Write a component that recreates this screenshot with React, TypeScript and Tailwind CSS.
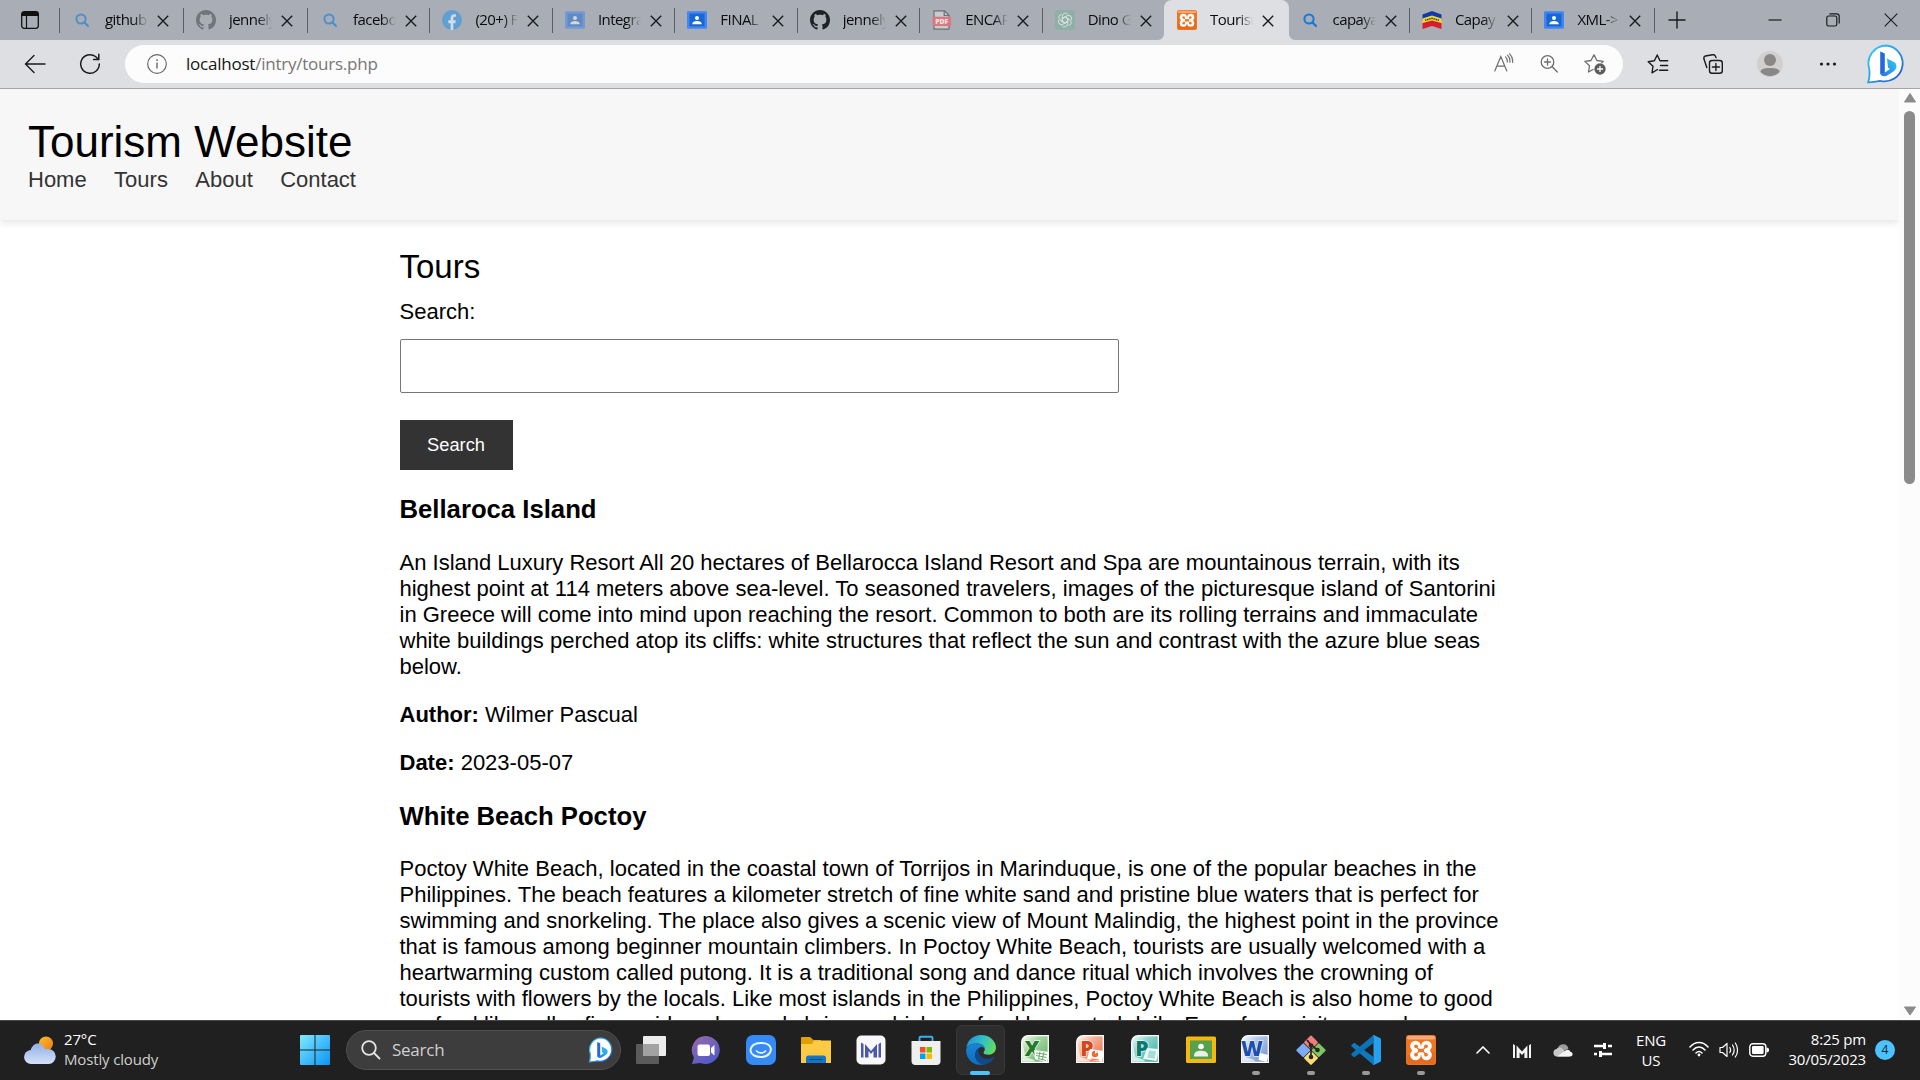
import React from "react";

const ui = "font-['Open_Sans',sans-serif]";

/* ---------- shared artwork ---------- */

function Magnifier({ faded }: { faded?: boolean }) {
  return (
    <svg viewBox="0 0 20 20" className={faded ? "size-5 shrink-0 opacity-60" : "size-5 shrink-0"}>
      <circle cx="9" cy="9" r="4.600" fill="none" stroke="#1878d2" strokeWidth="2" />
      <path d="M12.400 12.400 16 16" stroke="#1878d2" strokeWidth="2.200" strokeLinecap="round" />
    </svg>
  );
}

function Github({ faded }: { faded?: boolean }) {
  return (
    <svg viewBox="0 0 16 16" className={faded ? "size-5 shrink-0 opacity-40" : "size-5 shrink-0"} fill="#1d2227">
      <path d="M8 0C3.580 0 0 3.580 0 8c0 3.540 2.290 6.530 5.470 7.590.4.070.55-.17.55-.38 0-.19-.01-.82-.01-1.490-2.010.37-2.530-.49-2.690-.94-.09-.23-.48-.94-.82-1.130-.28-.15-.68-.52-.01-.53.63-.01 1.080.58 1.230.82.72 1.210 1.870.87 2.330.66.070-.52.28-.87.51-1.070-1.780-.2-3.640-.89-3.640-3.950 0-.87.31-1.590.82-2.150-.08-.2-.36-1.020.08-2.120 0 0 .67-.21 2.200.82.64-.18 1.320-.27 2-.27s1.360.09 2 .27c1.530-1.040 2.200-.82 2.200-.82.44 1.100.16 1.920.08 2.120.51.56.82 1.270.82 2.150 0 3.070-1.870 3.750-3.650 3.950.29.25.54.73.54 1.480 0 1.070-.01 1.930-.01 2.200 0 .21.15.46.55.38A8.010 8.010 0 0 0 16 8c0-4.420-3.580-8-8-8Z" />
    </svg>
  );
}

function Facebook() {
  return (
    <svg viewBox="0 0 20 20" className="size-5 shrink-0">
      <circle cx="10" cy="10" r="10" fill="#609fd2" />
      <path d="M8.600 20v-6.800H6.300v-3h2.300V8.100c0-2.600 1.500-3.900 3.700-3.900.9 0 1.600.1 1.600.1v2.500h-1.200c-1.100 0-1.400.7-1.400 1.400v2h2.500l-.4 3h-2.100V20Z" fill="#d3dce6" />
    </svg>
  );
}

function Classroom({ faded }: { faded?: boolean }) {
  return (
    <svg viewBox="0 0 20 20" className={faded ? "size-5 shrink-0 opacity-50" : "size-5 shrink-0"}>
      <rect y="1.200" width="20" height="17.600" rx="1" fill="#4285f4" />
      <rect x="2.500" y="3.600" width="15" height="12.800" fill="#1967d2" />
      <circle cx="10" cy="8" r="2" fill="#fff" />
      <path d="M5.200 14.200c0-2.200 2.400-3.200 4.800-3.200s4.800 1 4.800 3.200Z" fill="#fff" />
    </svg>
  );
}

function Pdf() {
  return (
    <svg viewBox="0 0 20 20" className="size-5 shrink-0">
      <path d="M2 .8h10.500L17 5.300V19.200H2Z" fill="#c9cbcd" stroke="#6b6f73" strokeWidth="1.200" />
      <path d="M12.200 1v4.500H17" fill="none" stroke="#6b6f73" strokeWidth="1.200" />
      <rect x=".5" y="6.800" width="18.600" height="9.200" rx="1" fill="#d9797f" />
      <text x="9.800" y="14" textAnchor="middle" fontSize="6.800" fontWeight="800" fontFamily="Open Sans" fill="#f2e4e5">PDF</text>
    </svg>
  );
}

function OpenAi() {
  return (
    <svg viewBox="0 0 20 20" className="size-5 shrink-0">
      <rect width="20" height="20" rx="3" fill="#8fb0a7" />
      <g fill="none" stroke="#d3dedb" strokeWidth="1">
        {[0, 60, 120, 180, 240, 300].map((a) => (
          <path key={a} transform={`rotate(${a} 10 10)`} d="M7.400 11.500V6.200a3.100 3.100 0 0 1 5.700-1.700M7.400 8.400 10 6.900l4 2.300" />
        ))}
      </g>
    </svg>
  );
}

function Xampp({ large }: { large?: boolean }) {
  return (
    <svg viewBox="0 0 30 30" className={large ? "size-[30px]" : "size-5 shrink-0"}>
      <rect width="30" height="30" rx="3" fill="#ee7623" />
      <rect x="1" y="1" width="28" height="3.500" rx="1.700" fill="#f6a878" />
      <path d="M1 20 29 17v9a3 3 0 0 1-3 3H4a3 3 0 0 1-3-3Z" fill="#e0661a" opacity=".6" />
      <g fill="#fff">
        <circle cx="9.500" cy="11" r="5.300" />
        <circle cx="20.500" cy="11" r="5.300" />
        <circle cx="9.500" cy="20" r="5.300" />
        <circle cx="20.500" cy="20" r="5.300" />
        <rect x="6" y="11.500" width="18" height="8" />
      </g>
      <g fill="#ee7623">
        <circle cx="10" cy="11.300" r="1.900" />
        <circle cx="20" cy="11.300" r="1.900" />
        <circle cx="10" cy="19.700" r="1.900" />
        <circle cx="20" cy="19.700" r="1.900" />
        <path d="M10 11.300c1.800 2 1.800 2.600 3 3.200h4c1.200-.6 1.200-1.200 3-3.200M10 19.700c1.800-2 1.800-2.600 3-3.200h4c1.200.6 1.200 1.200 3 3.200" fill="none" stroke="#ee7623" strokeWidth="1.300" />
        <rect x="12" y="14.300" width="6" height="2.400" />
      </g>
    </svg>
  );
}

function Shield() {
  return (
    <svg viewBox="0 0 20 20" className="size-5 shrink-0">
      <path d="M.5 4.500 10 1l9.500 3.500V10L10 7 .5 10Z" fill="#1638a8" />
      <path d="M.5 8.500 10 5.500l9.500 3V14L10 11.500.5 14Z" fill="#f3dc2f" />
      <path d="M.5 13 10 10.500l9.500 2.500v6L10 16 .5 19Z" fill="#d91c2c" />
      <path d="M3 10.300 10 8.300l7 2" fill="none" stroke="#3b3a20" strokeWidth="1.500" strokeDasharray="1.500 .7" />
    </svg>
  );
}

function Bing({ className }: { className: string }) {
  return (
    <svg viewBox="0 0 40 40" className={className}>
      <defs>
        <linearGradient id="bingRing" x1="0" y1="0" x2="1" y2="1">
          <stop offset="0" stopColor="#38d0f2" />
          <stop offset=".5" stopColor="#2c9bec" />
          <stop offset="1" stopColor="#1b4fc9" />
        </linearGradient>
        <linearGradient id="bingB" x1="0" y1="1" x2="1" y2="0">
          <stop offset="0" stopColor="#2a6fe8" />
          <stop offset=".5" stopColor="#2aa0ee" />
          <stop offset="1" stopColor="#35cdf0" />
        </linearGradient>
      </defs>
      <path d="M20.500 1.500a18 18 0 1 1-6.500 35.300c-3.500.5-7 1.400-11.800 1.500C3.800 34 3.700 29 3.300 25A18 18 0 0 1 20.500 1.500Z" fill="#fff" stroke="url(#bingRing)" strokeWidth="1.800" />
      <path d="M14.200 7.600 18.800 9.600v19.500l-2 2.500-2.600-2Z" fill="#2468e0" />
      <path d="m21 14.500 7.500 3.800c3 2.500 2.300 7-.8 9l-6.500 4.100c-3.600 1.800-7 .2-7-3 2 1.400 3.500.8 4.600 0l5.200-3.400-2-1.200Z" fill="url(#bingB)" />
    </svg>
  );
}

/* ---------- browser tabs ---------- */

type TabInfo = { icon: React.ReactNode; label: string; active?: boolean; line?: boolean; wide?: boolean };

const tabs: TabInfo[] = [
  { icon: <Magnifier faded />, label: "github", line: true, wide: true },
  { icon: <Github faded />, label: "jennely", line: true, wide: true },
  { icon: <Magnifier faded />, label: "facebo", line: true },
  { icon: <Facebook />, label: "(20+) F", line: true },
  { icon: <Classroom faded />, label: "Integra", line: true },
  { icon: <Classroom />, label: "FINAL", line: true },
  { icon: <Github />, label: "jennely", line: true },
  { icon: <Pdf />, label: "ENCAP", line: true },
  { icon: <OpenAi />, label: "Dino G", line: true },
  { icon: <Xampp />, label: "Tourism", active: true },
  { icon: <Magnifier />, label: "capaya" },
  { icon: <Shield />, label: "Capay", line: true },
  { icon: <Classroom />, label: "XML->", line: true },
];

function Tab({ icon, label, active, line, wide }: TabInfo) {
  return (
    <div className={wide ? "relative h-10 w-[124px] shrink-0" : "relative h-10 w-[122.450px] shrink-0"}>
      {line && <div className="absolute top-2 left-0 h-[25px] w-px bg-[#5c5f63]" />}
      {active && (
        <>
          <div className="absolute inset-y-0 -right-[2px] left-0 rounded-t-lg bg-[#dedfe3]" />
          <svg viewBox="0 0 6 6" className="absolute bottom-0 -left-[6px] size-[6px]" fill="#dedfe3"><path d="M6 0v6H0a6 6 0 0 0 6-6Z" /></svg>
          <svg viewBox="0 0 6 6" className="absolute -right-[8px] bottom-0 size-[6px]" fill="#dedfe3"><path d="M0 0v6h6A6 6 0 0 1 0 0Z" /></svg>
        </>
      )}
      <div className="relative flex h-[39px] items-center pl-[13px]">
        {icon}
        <span className="mb-px ml-[13px] w-[43px] overflow-hidden text-[15px] leading-5 tracking-[-0.550px] whitespace-nowrap text-[#0b0b0b] [mask-image:linear-gradient(to_right,#000_66%,transparent)]">
          {label}
        </span>
        <svg viewBox="0 0 12 12" className="mt-[2px] ml-[9px] size-3 shrink-0" stroke="#1b1b1b" strokeWidth="1.400">
          <path d="M.8.800 11.200 11.200M11.200.800.800 11.200" />
        </svg>
      </div>
    </div>
  );
}

function TabStrip() {
  return (
    <div className="flex h-10 shrink-0 bg-[#a9aeb6]">
      <div className="flex w-[59px] shrink-0 items-center pl-[21px]">
        <svg viewBox="0 0 18 18" className="size-[18px]">
          <rect x=".7" y=".7" width="16.600" height="16.600" rx="2.500" fill="none" stroke="#111" strokeWidth="1.300" />
          <path d="M.5 5V3A2.500 2.500 0 0 1 3 .5h12A2.500 2.500 0 0 1 17.500 3v2Z" fill="#111" />
          <path d="M5.500 5v12" stroke="#111" strokeWidth="1.200" />
        </svg>
      </div>
      {tabs.map((t, i) => (
        <Tab key={i} {...t} />
      ))}
      <div className="relative flex h-[39px] flex-1 items-center justify-between pr-[22px] pl-[14px]">
        <div className="absolute top-2 left-0 h-[25px] w-px bg-[#5c5f63]" />
        <svg viewBox="0 0 18 18" className="size-[18px]" stroke="#1b1b1b" strokeWidth="1.400">
          <path d="M9 .5v17M.5 9h17" />
        </svg>
        <div className="flex items-center gap-11">
          <svg viewBox="0 0 14 14" className="size-[14px]" stroke="#1b1b1b" strokeWidth="1.200">
            <path d="M.5 7h13" />
          </svg>
          <svg viewBox="0 0 14 14" className="size-[14px]" fill="none" stroke="#1b1b1b" strokeWidth="1.200">
            <rect x=".8" y="3" width="10" height="10" rx="1.800" />
            <path d="M3.500.8h7A2.700 2.700 0 0 1 13.200 3.500v7" />
          </svg>
          <svg viewBox="0 0 14 14" className="size-[14px]" stroke="#1b1b1b" strokeWidth="1.100">
            <path d="M.7.700 13.300 13.300M13.300.700.700 13.300" />
          </svg>
        </div>
      </div>
    </div>
  );
}

/* ---------- address bar ---------- */

function Toolbar() {
  return (
    <div className="flex h-[49px] shrink-0 items-center border-b border-b-[#a3a5a9] bg-[#dedfe3] pl-6">
      <svg viewBox="0 0 22 22" className="mb-px size-[22px]" fill="none" stroke="#1b1b1b" strokeWidth="1.400" strokeLinecap="round">
        <path d="M21 11H1.500M10 2.500 1.500 11l8.500 8.500" />
      </svg>
      <svg viewBox="0 0 22 22" className="ml-[33px] size-[22px]" fill="none" stroke="#1b1b1b" strokeWidth="1.500" strokeLinecap="round">
        <path d="M20.300 11A9.300 9.300 0 1 1 16.500 3.500L19.500 6.200M19.800 1.300v5.200h-5.200" />
      </svg>
      <div className="ml-6 flex h-[38px] w-[1498px] items-center rounded-full bg-[#fcfcfc] pr-[17px] pl-[22px]">
        <svg viewBox="0 0 20 20" className="size-5" fill="none" stroke="#6a6a6a" strokeWidth="1.200">
          <circle cx="10" cy="10" r="9.300" />
          <path d="M10 8.500v6M10 5.300v1.600" strokeWidth="1.400" />
        </svg>
        <span className="mb-px ml-[19px] text-[17px] leading-5 tracking-[-0.230px] text-[#767676]">
          <span className="text-[#161616]">localhost</span>/intry/tours.php
        </span>
        <svg viewBox="0 0 20 20" className="mr-[26px] mb-[3px] ml-auto size-5" fill="none" stroke="#6d6d6d" strokeWidth="1.200" strokeLinecap="round">
          <path d="M.8 18 6.800 3.500 12.800 18M2.800 13.200h8M11.500 3.800c1.500 1.500 2 3.400 1.800 5.200M13.500 2.200c2 2 2.700 4.400 2.400 7M15.600.8c2.500 2.500 3.500 5.500 3 8.500" />
        </svg>
        <svg viewBox="0 0 18 18" className="mr-[26px] mb-px size-[18px]" fill="none" stroke="#6d6d6d" strokeWidth="1.300" strokeLinecap="round">
          <circle cx="7.500" cy="7" r="6.300" />
          <path d="m12 11.500 5.300 5.500M4.500 7h6M7.500 4v6" />
        </svg>
        <svg viewBox="0 0 22 22" className="size-[22px]" fill="none" stroke="#6d6d6d" strokeWidth="1.300" strokeLinejoin="round">
          <path d="M9.500 16.200 4.500 19l1-6.200L.8 8.400l6.200-.9L10 1.800l2.900 5.700 6.300.9-1.700 1.600" />
          <circle cx="16" cy="16" r="5.700" fill="#5d5d5d" stroke="none" />
          <path d="M16 13v6M13 16h6" stroke="#fff" />
        </svg>
      </div>
      <svg viewBox="0 0 22 20" className="ml-6 h-5 w-[22px]" fill="none" stroke="#1b1b1b" strokeWidth="1.400" strokeLinecap="round" strokeLinejoin="round">
        <path d="M10.500 15.500 5 18.800l1-6.500L1.200 7.700l6.200-1L10.200 1l2.800 5.700h7.700M13.500 11.500h7.200M12.500 16.300h8.200" />
      </svg>
      <svg viewBox="0 0 20 20" className="ml-[34px] size-5" fill="none" stroke="#1b1b1b" strokeWidth="1.400" strokeLinecap="round">
        <rect x="6.500" y="6.500" width="12.800" height="12.800" rx="2.500" />
        <path d="M12.900 9.500v7M9.400 13h7M3.800 13.500.9 4.800A2.400 2.400 0 0 1 2.400 2L9.500.8A2.400 2.400 0 0 1 12.300 2l.8 1.700" />
      </svg>
      <svg viewBox="0 0 26 26" className="ml-[34px] size-[26px]">
        <circle cx="13" cy="13" r="13" fill="#d2d0ce" />
        <circle cx="13" cy="9" r="6" fill="#8a8886" />
        <path d="M3.500 21c0-2.500 3-4 9.500-4s9.500 1.500 9.500 4A13 13 0 0 1 3.500 21Z" fill="#8a8886" />
      </svg>
      <svg viewBox="0 0 18 6" className="ml-9 h-[6px] w-[18px]" fill="#1b1b1b">
        <circle cx="2.500" cy="3" r="1.600" />
        <circle cx="9" cy="3" r="1.600" />
        <circle cx="15.500" cy="3" r="1.600" />
      </svg>
      <Bing className="ml-[29px] size-10" />
    </div>
  );
}

/* ---------- web page ---------- */

type Tour = { name: string; lines: string[]; author?: string; date?: string };

const tours: Tour[] = [
  {
    name: "Bellaroca Island",
    lines: [
      "An Island Luxury Resort All 20 hectares of Bellarocca Island Resort and Spa are mountainous terrain, with its",
      "highest point at 114 meters above sea-level. To seasoned travelers, images of the picturesque island of Santorini",
      "in Greece will come into mind upon reaching the resort. Common to both are its rolling terrains and immaculate",
      "white buildings perched atop its cliffs: white structures that reflect the sun and contrast with the azure blue seas",
      "below.",
    ],
    author: "Wilmer Pascual",
    date: "2023-05-07",
  },
  {
    name: "White Beach Poctoy",
    lines: [
      "Poctoy White Beach, located in the coastal town of Torrijos in Marinduque, is one of the popular beaches in the",
      "Philippines. The beach features a kilometer stretch of fine white sand and pristine blue waters that is perfect for",
      "swimming and snorkeling. The place also gives a scenic view of Mount Malindig, the highest point in the province",
      "that is famous among beginner mountain climbers. In Poctoy White Beach, tourists are usually welcomed with a",
      "heartwarming custom called putong. It is a traditional song and dance ritual which involves the crowning of",
      "tourists with flowers by the locals. Like most islands in the Philippines, Poctoy White Beach is also home to good",
      "seafood like yellowfin, squid, crabs, and shrimps which are food harvested daily. Even for a visitors, and",
    ],
  },
];

function WebPage() {
  return (
    <div className="flex min-h-0 flex-1 overflow-hidden bg-white font-['Liberation_Sans',Arial,sans-serif] text-[22px] leading-[26px] text-black">
      <div className="min-w-0 flex-1 overflow-hidden">
        <header className="h-[131px] bg-[#f7f7f7] px-7 pt-[27px] shadow-[0_3px_7px_rgba(0,0,0,0.100)]">
          <h1 className="text-[44px] leading-[51px]">Tourism Website</h1>
          <nav className="flex gap-[27.400px] text-[#333]">
            <a>Home</a>
            <a>Tours</a>
            <a>About</a>
            <a>Contact</a>
          </nav>
        </header>
        <main className="ml-[399.500px] w-[1100px] pt-7">
          <h2 className="text-[33px] leading-[38px]">Tours</h2>
          <p className="mt-[13px]">Search:</p>
          <input className="mt-[14px] block h-[54px] w-[719px] rounded-[2px] border border-[#767676] bg-white" />
          <button className="mt-[27px] block h-[50px] w-[113px] bg-[#333] text-[18.300px] text-white">Search</button>
          {tours.map((t) => (
            <section key={t.name} className="group">
              <h3 className="mt-6 text-[25.700px] leading-[30px] font-bold group-last:mt-[25px]">{t.name}</h3>
              <p className="mt-[26px] whitespace-nowrap group-last:mt-[25px]">
                {t.lines.map((l) => (
                  <span key={l} className="block">{l}</span>
                ))}
              </p>
              {t.author && <p className="mt-[22px]"><b>Author:</b> {t.author}</p>}
              {t.date && <p className="mt-[22px]"><b>Date:</b> {t.date}</p>}
            </section>
          ))}
        </main>
      </div>
      <div className="flex w-[21px] shrink-0 flex-col items-center justify-between bg-[#fcfcfc] pt-1 pb-1">
        <svg viewBox="0 0 12 10" className="h-[10px] w-3 shrink-0"><path d="M6 .5 11.500 9H.5Z" fill="#8b8b8b" stroke="#8b8b8b" strokeLinejoin="round" /></svg>
        <div className="mt-2 h-[373px] w-[11px] rounded-full bg-[#8b8b8b]" />
        <div className="flex-1" />
        <svg viewBox="0 0 12 10" className="h-[10px] w-3 shrink-0"><path d="M6 9 .5 1h11Z" fill="#8b8b8b" stroke="#8b8b8b" strokeLinejoin="round" /></svg>
      </div>
    </div>
  );
}

/* ---------- taskbar ---------- */

function Office({ letter, id, dark, mid, light, children }: { letter: string; id: string; dark: string; mid: string; light: string; children: React.ReactNode }) {
  return (
    <svg viewBox="0 0 28 28" className="mr-[2px] mb-[2px] size-7">
      <defs>
        <linearGradient id={id} x1="0" y1="0" x2="1" y2="1">
          <stop offset="0" stopColor="#fff" />
          <stop offset=".35" stopColor={light} />
          <stop offset="1" stopColor={mid} />
        </linearGradient>
      </defs>
      <path d="M7 .7h20.300v26.600H.7V7A6.300 6.300 0 0 1 7 .7Z" fill={`url(#${id})`} stroke="#fff" strokeWidth="1.300" />
      <path d="M1.500 24V8l3 14 9 3v1.500h-12Z" fill="#fff" opacity=".7" />
      <text x="11" y="20.500" textAnchor="middle" fontFamily="Open Sans" fontWeight="800" fontSize="21" fill={dark} stroke="#fff" strokeWidth="1.200" paintOrder="stroke">{letter}</text>
      {children}
    </svg>
  );
}

const icon30 = "size-[30px]";

const apps: { name: string; art: React.ReactNode; state?: "active" | "open" }[] = [
  {
    name: "task-view",
    art: (
      <svg viewBox="0 0 30 30" className={icon30}>
        <rect x="7" y="1" width="23" height="20" rx="1" fill="#ececec" />
        <rect x="0" y="9" width="23" height="20" rx="1" fill="#5b5b5b" />
        <rect x="7" y="9" width="16" height="12" fill="#a2a2a2" />
      </svg>
    ),
  },
  {
    name: "chat",
    art: (
      <svg viewBox="0 0 30 30" className={icon30}>
        <defs>
          <linearGradient id="chatFill" x1="0" y1="0" x2=".7" y2="1">
            <stop offset="0" stopColor="#9a6aa8" />
            <stop offset="1" stopColor="#5059c9" />
          </linearGradient>
        </defs>
        <path d="M15 1a14 14 0 1 1-5.500 27L1 29l2-6.500A14 14 0 0 1 15 1Z" fill="url(#chatFill)" />
        <rect x="6.500" y="9.500" width="12.500" height="11.500" rx="2" fill="#fff" />
        <path d="m20 13 3.500-3v10.500L20 17.500Z" fill="#fff" />
      </svg>
    ),
  },
  {
    name: "assistant",
    art: (
      <svg viewBox="0 0 30 30" className={icon30}>
        <rect width="30" height="30" rx="7" fill="#368af6" />
        <path d="M8 20.500C4.500 18.500 4 15 5.300 12.500 7 9.300 10.500 8 15 8s8.300 1.500 9.500 4.500c1.500 4-2 9.500-9.500 9.500-2.800 0-5-.5-7-1.500" fill="none" stroke="#e8f3ff" strokeWidth="2" strokeLinecap="round" />
        <path d="M10.500 16c2.500 2.600 6.500 2.600 9 0" fill="none" stroke="#e8f3ff" strokeWidth="1.700" strokeLinecap="round" />
      </svg>
    ),
  },
  {
    name: "explorer",
    art: (
      <svg viewBox="0 0 30 30" className={icon30}>
        <path d="M0 3a1 1 0 0 1 1-1h8l3.500 3H20v8H0Z" fill="#e0a000" />
        <path d="M0 9h11l2-3.500h17V28H0Z" fill="#fdcb43" />
        <path d="M5 28v-5a2.500 2.500 0 0 1 2.500-2.500h15A2.500 2.500 0 0 1 25 23v5Z" fill="#1376c8" />
        <path d="M8.500 24.500h13" stroke="#0b4f8d" strokeWidth="1.300" />
      </svg>
    ),
  },
  {
    name: "mendeley",
    art: (
      <svg viewBox="0 0 30 30" className={icon30}>
        <rect x=".5" y=".5" width="29" height="29" rx="5" fill="#f8f8fb" />
        <g fill="#4b57a8">
          <path d="M5 7.500l2.500 1.500v13.500H5ZM25 7.500 22.500 9v13.500H25Z" />
          <path d="M9 22.500V9l6 7 6-7v13.500h-3.500V16L15 19l-2.500-3v6.500Z" />
        </g>
      </svg>
    ),
  },
  {
    name: "store",
    art: (
      <svg viewBox="0 0 30 30" className={icon30}>
        <path d="M8.500 6.500V3A1.200 1.200 0 0 1 9.700 1.800h10.600A1.200 1.200 0 0 1 21.500 3v3.500" fill="none" stroke="#36b3ea" strokeWidth="1.900" />
        <path d="M.5 6h29v20a4 4 0 0 1-4 4h-21a4 4 0 0 1-4-4Z" fill="#efefef" />
        <path d="M9 12h5.500v5.500H9Z" fill="#f25022" />
        <path d="M15.500 12H21v5.500h-5.500Z" fill="#7fba00" />
        <path d="M9 18.500h5.500V24H9Z" fill="#00a4ef" />
        <path d="M15.500 18.500H21V24h-5.500Z" fill="#ffb900" />
      </svg>
    ),
  },
  {
    name: "edge",
    state: "active",
    art: (
      <svg viewBox="0 0 30 30" className={icon30}>
        <defs>
          <linearGradient id="edgeTop" x1="0" y1=".3" x2="1" y2=".6">
            <stop offset="0" stopColor="#2191d8" />
            <stop offset=".5" stopColor="#31bfc9" />
            <stop offset="1" stopColor="#66dc58" />
          </linearGradient>
          <linearGradient id="edgeLow" x1="0" y1="0" x2="0" y2="1">
            <stop offset="0" stopColor="#1a83d4" />
            <stop offset="1" stopColor="#0f6ec2" />
          </linearGradient>
        </defs>
        <path d="M.2 13C1.500 5 7.500 0 15 0c9 0 15 6.500 15 12.500 0 4.500-3.500 7.200-7.300 7.200-3.400 0-5.200-1-5.200-2 0-.8 1.300-1.500 1.300-3.700C18.800 11 15.500 8.500 11 8.500 5.500 8.500 2 10.500.2 13Z" fill="url(#edgeTop)" />
        <path d="M.1 14.500C1 10.800 5.500 8.500 10.500 8.500c5 0 8 2.500 8.300 5.500-1-1.800-3-2.500-4.500-1.800C9.500 14 8.500 19 10.500 23c1.500 3.500 4.500 6 8 6.500-9.500 2-18.800-4.500-18.400-15Z" fill="url(#edgeLow)" />
        <path d="M14.300 12.200c-2 2-2.500 4.500-1 7.300 2.500 4.500 8.200 5.500 13.700 2.700.9-.4 1.400.2 1 .9A14.500 14.500 0 0 1 18 29.700C12 29 8.500 24 9 19.500c.3-3.300 2.500-6.300 5.300-7.300Z" fill="#114a8b" />
      </svg>
    ),
  },
  {
    name: "excel",
    art: (
      <Office letter="X" id="docExcel" dark="#227a2b" mid="#5fae62" light="#a9d8a5">
        <path d="m13 15 15 2-2 11-12-4Z" fill="#fff" />
        <path d="m15 18 11 1.500M15 20.500l10.500 2M17 23.500l8 2M19 16.500l-1.500 8M23 17l-2 8.500" stroke="#59a35d" strokeWidth=".9" />
      </Office>
    ),
  },
  {
    name: "powerpoint",
    art: (
      <Office letter="P" id="docPowerpoint" dark="#d4471c" mid="#e5643a" light="#f6b59c">
        <path d="m14 14 14 2-2 11-15-3Z" fill="#fff" />
        <circle cx="19" cy="19" r="3.200" fill="#ea6a3c" />
        <path d="M19 19v-3.500l3 1.500Z" fill="#fff" />
        <path d="m15 24 8 1" stroke="#ea6a3c" />
      </Office>
    ),
  },
  {
    name: "publisher",
    art: (
      <Office letter="P" id="docPublisher" dark="#087a72" mid="#2ea79a" light="#90d6cc">
        <path d="m16 13 12 1-2.500 12L12 24Z" fill="#e9f8f5" />
        <path d="m18 15.500 7 .7-1.500 7.500-7-1.200Z" fill="#a8dcd6" />
      </Office>
    ),
  },
  {
    name: "classroom",
    art: (
      <svg viewBox="0 0 30 30" className={icon30}>
        <rect y="1.500" width="30" height="26.500" rx="1.500" fill="#f3b912" />
        <rect x="4" y="5.500" width="22" height="18.500" fill="#57a04d" />
        <circle cx="15" cy="11.500" r="2.800" fill="#fff" />
        <path d="M8 20.500c0-3.500 3.500-4.800 7-4.800s7 1.300 7 4.800v1H8Z" fill="#e8f2e6" />
      </svg>
    ),
  },
  {
    name: "word",
    state: "open",
    art: (
      <Office letter="W" id="docWord" dark="#1b50b0" mid="#6c8fd0" light="#b5caee">
        <path d="m19 18 8.500 2-2 7-8-2Z" fill="#fff" />
      </Office>
    ),
  },
  {
    name: "git",
    state: "open",
    art: (
      <svg viewBox="0 0 30 30" className={icon30}>
        <g transform="rotate(45 15 15)">
          <rect x="4.500" y="4.500" width="10.300" height="10.300" rx="1" fill="#f27c7c" />
          <rect x="15.500" y="4.500" width="10.300" height="10.300" rx="1" fill="#80c660" />
          <rect x="4.500" y="15.500" width="10.300" height="10.300" rx="1" fill="#7eabf5" />
          <rect x="15.500" y="15.500" width="10.300" height="10.300" rx="1" fill="#fbdc78" />
        </g>
        <path d="M11 5l4 5v12M15 10l6.500 5" fill="none" stroke="#262626" strokeWidth="1.700" />
        <circle cx="15" cy="10.500" r="2.300" fill="#262626" />
        <circle cx="15" cy="22" r="2.300" fill="#262626" />
        <circle cx="21.500" cy="15" r="2.300" fill="#262626" />
      </svg>
    ),
  },
  {
    name: "vscode",
    state: "open",
    art: (
      <svg viewBox="0 0 30 30" className={icon30}>
        <path d="M.5 10 2.500 8.300a1.300 1.300 0 0 1 1.600 0L22.500 22v8L.7 11.500a1.200 1.200 0 0 1-.2-1.500Z" fill="#1178bd" />
        <path d="M.5 20 2.500 21.700a1.300 1.300 0 0 0 1.600 0L22.500 8V0L.7 18.500a1.200 1.200 0 0 0-.2 1.500Z" fill="#0b74b8" />
        <path d="M21.500.3c.5-.4 1.200-.3 1.800 0l5.700 2.700a1.700 1.700 0 0 1 1 1.600v20.800a1.700 1.700 0 0 1-1 1.600l-5.700 2.700c-.6.300-1.300.4-1.800 0 .6.200 1-.3 1-1V1.300c0-.7-.4-1.200-1-1Z" fill="#27a0f0" />
      </svg>
    ),
  },
  { name: "xampp", state: "open", art: <Xampp large /> },
];

function Taskbar() {
  return (
    <div className="h-[60px] shrink-0 border-t border-[#4a4a4a] bg-[#202020]">
      <div className="flex h-[58px] items-center text-white">
        <div className="flex w-[299px] shrink-0 items-center pl-6">
          <svg viewBox="0 0 32 32" className="size-8">
            <defs>
              <linearGradient id="cloudFill" x1="0" y1="0" x2="0" y2="1">
                <stop offset="0" stopColor="#8fb0e8" />
                <stop offset="1" stopColor="#d5e2f7" />
              </linearGradient>
              <linearGradient id="sunFill" x1="0" y1="0" x2="1" y2="1">
                <stop offset="0" stopColor="#fbbc2c" />
                <stop offset="1" stopColor="#ef7d12" />
              </linearGradient>
            </defs>
            <circle cx="22" cy="9.500" r="7" fill="url(#sunFill)" />
            <path d="M7.500 30a7 7 0 0 1-.8-14C8 12 10.500 9.500 14 9.500s6 2.500 7 6c1-.4 1.800-.5 3-.5a7.500 7.500 0 0 1 .5 15Z" fill="url(#cloudFill)" />
          </svg>
          <div className="mb-[2px] ml-2 text-[15px] leading-5 tracking-[-0.150px]">
            <div>27°C</div>
            <div className="text-[#cfcfcf]">Mostly cloudy</div>
          </div>
        </div>
        <svg viewBox="0 0 30 30" className="ml-px size-[30px] shrink-0">
          <defs>
            <linearGradient id="winFill" x1="0" y1="0" x2="1" y2="1">
              <stop offset="0" stopColor="#7fe9ff" />
              <stop offset="1" stopColor="#0a94f5" />
            </linearGradient>
          </defs>
          <path d="M1 0h13.500v14.500H0V1a1 1 0 0 1 1-1ZM15.500 0H29a1 1 0 0 1 1 1v13.500H15.500ZM0 15.500h14.500V30H1a1 1 0 0 1-1-1ZM15.500 15.500H30V29a1 1 0 0 1-1 1H15.500Z" fill="url(#winFill)" />
        </svg>
        <div className="ml-[16px] flex h-10 w-[275px] shrink-0 items-center rounded-full border border-[#4f4f4f] bg-[#3d3d3d] pr-[6px] pl-[14px]">
          <svg viewBox="0 0 20 20" className="size-5" fill="none" stroke="#e4e4e4" strokeWidth="1.800" strokeLinecap="round">
            <circle cx="8" cy="8" r="6.800" />
            <path d="m13 13 5.500 5.500" />
          </svg>
          <span className="ml-[11px] text-[17px] leading-5 tracking-[-0.250px] text-[#cfcfcf]">Search</span>
          <Bing className="ml-auto size-[26px]" />
        </div>
        <div className="ml-[2px] flex shrink-0">
          {apps.map((a) => (
            <div key={a.name} className="relative flex h-[58px] w-[55px] items-center justify-center">
              {a.state === "active" && <div className="absolute inset-x-[3px] top-1 h-[50px] rounded-md border border-[#383838] bg-[#2d2d2d]" />}
              <div className="relative">{a.art}</div>
              {a.state === "active" && <div className="absolute bottom-1 left-[17px] h-1 w-5 rounded-full bg-[#4cc2ff]" />}
              {a.state === "open" && <div className="absolute bottom-1 left-[24px] h-1 w-2 rounded-full bg-[#9a9a9a]" />}
            </div>
          ))}
        </div>
        <svg viewBox="0 0 14 8" className="ml-[28px] h-2 w-[14px] shrink-0" fill="none" stroke="#fff" strokeWidth="1.600" strokeLinecap="round">
          <path d="m1 7 6-6 6 6" />
        </svg>
        <svg viewBox="0 0 18 14" className="mt-[2px] ml-[23px] h-[14px] w-[18px] shrink-0" fill="#f4f4f4">
          <path d="M0 0l2 1.200V14H0ZM18 0l-2 1.200V14h2ZM3.600 14V1.500L9 7.500l5.400-6V14h-3V8.500L9 11 6.600 8.500V14Z" />
        </svg>
        <svg viewBox="0 0 20 14" className="ml-[22px] h-[14px] w-5 shrink-0">
          <path d="M5 5a5.500 5.500 0 0 1 10.500.5L9 9Z" fill="#9c9c9c" />
          <path d="M3.800 13.500A3.800 3.800 0 0 1 3.500 6C6 3.500 9 4.500 10.500 7l6 6.500Z" fill="#c8c8c8" />
          <path d="M4 13.500 12 8c1.500-2 5-1.500 5.300.8 3.200.6 3.200 4.700-.3 4.700Z" fill="#f4f4f4" />
        </svg>
        <svg viewBox="0 0 18 16" className="ml-[21px] h-4 w-[18px] shrink-0" stroke="#fff" fill="#fff" strokeWidth="2.600">
          <path d="M0 4h11M14 4h4M0 12h3M7 12h11" />
          <rect x="9" y="1" width="3" height="6" stroke="none" />
          <rect x="5" y="9" width="3" height="6" stroke="none" />
        </svg>
        <div className="mb-px ml-[21px] w-[36px] shrink-0 text-center text-[15px] leading-5 tracking-[-0.200px]">ENG<br />US</div>
        <svg viewBox="0 0 20 16" className="mb-[2px] ml-[20px] h-4 w-5 shrink-0" fill="none" stroke="#fff" strokeWidth="1.500" strokeLinecap="round">
          <path d="M1 6c5-6 13-6 18 0M4 9c3.500-4 8.500-4 12 0M7 12c2-2 4-2 6 0" />
          <circle cx="10" cy="14" r="1.400" fill="#fff" stroke="none" />
        </svg>
        <svg viewBox="0 0 20 18" className="ml-[10px] h-[18px] w-5 shrink-0" fill="none" stroke="#fff" strokeWidth="1.200" strokeLinecap="round" strokeLinejoin="round">
          <path d="M1 6.500h2.500L8 2.500v13l-4.500-4H1ZM10.800 6.500c1 1.500 1 3.500 0 5M13.500 4c2 3 2 7 0 10M16.300 2c3 4 3 10 0 14" />
        </svg>
        <svg viewBox="0 0 20 14" className="ml-[10px] h-[14px] w-5 shrink-0">
          <rect x=".8" y=".8" width="16" height="12.400" rx="3" fill="none" stroke="#fff" strokeWidth="1.400" />
          <rect x="3" y="3" width="11.600" height="8" rx="1.200" fill="#fff" />
          <path d="M17.500 4.500c2 0 2.500 1 2.500 2.500s-.5 2.500-2.500 2.500Z" fill="#fff" />
        </svg>
        <div className="mb-[2px] w-[97px] shrink-0 text-right text-[15px] leading-5 tracking-[-0.200px] whitespace-nowrap">8:25 pm<br />30/05/2023</div>
        <div className="ml-[9px] flex size-5 shrink-0 items-center justify-center rounded-full bg-[#4cc2ff] text-[12px] text-[#15252f]">4</div>
      </div>
    </div>
  );
}

export default function App() {
  return (
    <div className={`${ui} flex h-screen w-screen flex-col overflow-hidden bg-white`}>
      <TabStrip />
      <Toolbar />
      <WebPage />
      <Taskbar />
    </div>
  );
}
